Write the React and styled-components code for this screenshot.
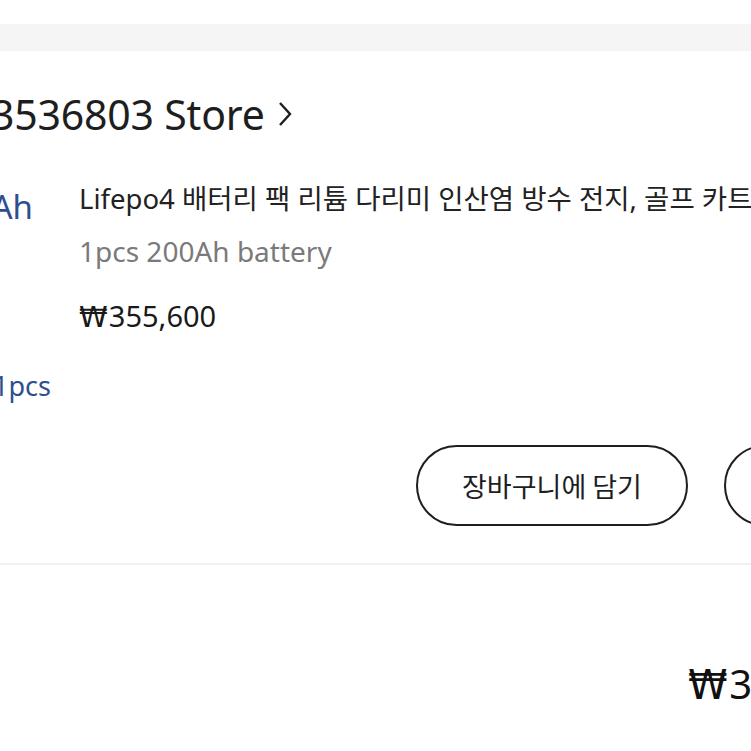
import React from 'react'
import styled, { createGlobalStyle } from 'styled-components'

const GlobalStyle = createGlobalStyle`
  html, body {
    margin: 0;
    padding: 0;
    background: #FFFFFF;
    overflow: hidden;
  }
  body {
    font-family: 'Noto Sans', 'Noto Sans CJK KR', sans-serif;
    color: #1E1E1E;
  }
`

function App() {
  return (
    <>
      <GlobalStyle />
      <SCPage>
        <SCTopSpace />
        <SCGrayBand />

        <SCStoreHeader>
          <SCStoreName>3536803 Store</SCStoreName>
          <SCChevron viewBox="0 0 16 30" width="16" height="30">
            <path d="M3 4 L13 15 L3 26" fill="none" stroke="#1E1E1E" strokeWidth="2.4" />
          </SCChevron>
        </SCStoreHeader>

        <SCItemRow>
          <SCOptionCol>
            <SCOptionText big right={46} top={6}>200Ah</SCOptionText>
            <SCOptionText right={28} top={142}>1pcs</SCOptionText>
          </SCOptionCol>

          <SCItemInfo>
            <SCItemTitle>Lifepo4 배터리 팩 리튬 다리미 인산염 방수 전지, 골프 카트 RV 캠핑용</SCItemTitle>
            <SCItemOption>1pcs 200Ah battery</SCItemOption>
            <SCItemPrice><SCWon>₩</SCWon>355,600</SCItemPrice>

            <SCButtonRow>
              <SCPillButton>장바구니에 담기</SCPillButton>
              <SCPillButton>바로 구매하기</SCPillButton>
            </SCButtonRow>
          </SCItemInfo>
        </SCItemRow>

        <SCDivider />

        <SCTotalRow>
          <SCTotalPrice><SCWon>₩</SCWon>355,600</SCTotalPrice>
        </SCTotalRow>
      </SCPage>
    </>
  )
}

export default App

const SCPage = styled.div`
  width: 751px;
  height: 751px;
  overflow: hidden;
  background-color: #FFFFFF;
`

const SCTopSpace = styled.div`
  height: 24px;
`

const SCGrayBand = styled.div`
  height: 27px;
  background-color: #F5F5F5;
`

const SCStoreHeader = styled.div`
  display: flex;
  align-items: center;
  padding-top: 37px;
  height: 52px;
  margin-left: -9px;
  white-space: nowrap;
`

const SCStoreName = styled.span`
  font-size: 41px;
  line-height: 52px;
  font-weight: 400;
  letter-spacing: -0.2px;
  color: #1E1E1E;
`

const SCChevron = styled.svg`
  margin-left: 12px;
  flex-shrink: 0;
`

const SCItemRow = styled.div`
  display: flex;
  padding-top: 41px;
`

const SCOptionCol = styled.div`
  width: 79px;
  flex-shrink: 0;
  display: flex;
  flex-direction: column;
  align-items: flex-end;
  overflow: hidden;
`

const SCOptionText = styled.div`
  margin-right: ${(props) => props.right}px;
  margin-top: ${(props) => props.top}px;
  font-size: ${(props) => props.big ? '33px' : '27px'};
  line-height: ${(props) => props.big ? '40px' : '34px'};
  color: #2E4F8E;
  white-space: nowrap;
`

const SCItemInfo = styled.div`
  display: flex;
  flex-direction: column;
  white-space: nowrap;
`

const SCItemTitle = styled.div`
  font-size: 27.5px;
  line-height: 36px;
  color: #222222;
`

const SCItemOption = styled.div`
  margin-top: 16px;
  font-size: 28px;
  line-height: 36px;
  color: #7A7A7A;
`

const SCItemPrice = styled.div`
  margin-top: 29px;
  font-size: 29px;
  line-height: 36px;
  color: #1A1A1A;
`

const SCWon = styled.span`
  font-family: 'DejaVu Sans', sans-serif;
  margin-right: 0.04em;
`

const SCButtonRow = styled.div`
  display: flex;
  gap: 36px;
  margin-top: 110px;
  padding-left: 337px;
  padding-bottom: 37px;
`

const SCPillButton = styled.button`
  width: 272px;
  height: 81px;
  flex-shrink: 0;
  border: 2.5px solid #1E1E1E;
  border-radius: 41px;
  background-color: #FFFFFF;
  font-family: 'Noto Sans CJK KR', sans-serif;
  font-size: 27px;
  color: #1E1E1E;
  padding: 0;
`

const SCDivider = styled.div`
  height: 2px;
  background-color: #F1F1F1;
`

const SCTotalRow = styled.div`
  padding-top: 94px;
  padding-left: 688px;
  white-space: nowrap;
`

const SCTotalPrice = styled.div`
  font-size: 40px;
  line-height: 50px;
  color: #111111;
`
